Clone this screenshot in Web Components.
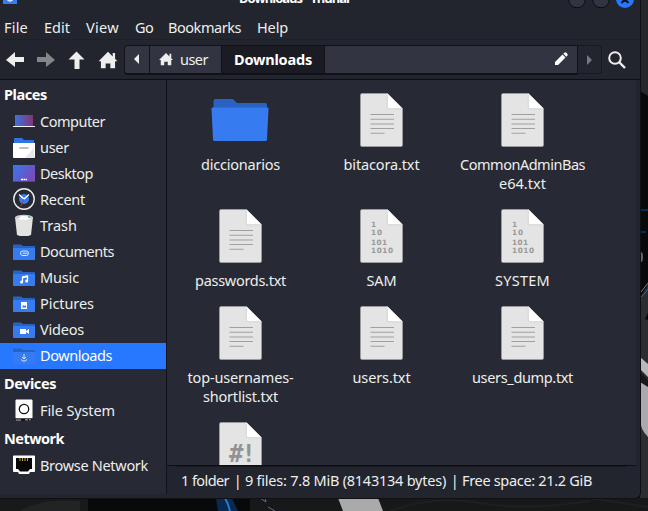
<!DOCTYPE html>
<html lang="es"><head><meta charset="utf-8"><title>Downloads - Thunar</title>
<style>html,body{margin:0;width:648px;height:511px;overflow:hidden;background:#090a0c}body{font:14.5px "Noto Sans",sans-serif;color:#eeeeec}</style></head>
<body><desk-top></desk-top>
<script>
const define=(name,html,setup)=>customElements.define(name,class extends HTMLElement{
  connectedCallback(){if(this.shadowRoot)return;const r=this.attachShadow({mode:'open'});r.innerHTML=typeof html==='function'?html(this):html;if(setup)setup(this,r)}
});
// Text run whose tracking is adjusted to a given width
define('fit-text','<style>:host{display:inline-block;white-space:pre}span{display:inline-block}</style><span></span>',(el,r)=>{
  const s=r.querySelector('span'),t=el.getAttribute('t'),w=+el.getAttribute('w');s.textContent=t;
  if(w){const n=s.getBoundingClientRect().width;s.style.letterSpacing=((w-n)/t.length)+'px';el.style.width=w+'px'}
});
const F=(t,w)=>`<fit-text t="${t}" w="${w}"></fit-text>`;
const homeP='M8 1 0 9h2v6h4v-4h4v4h4V9h2l-2-2V2h-2v3z';
const folder=g=>`<path d="M1 4.5h7l2 1.5h11q1 0 1 1v3H0V5q0-.5 1-.5" fill="#2a62c4"/><path d="M0 8h22v11q0 1-1 1H1q-1 0-1-1z" fill="#367bf0"/>${g}`;
const icons={
computer:'<defs><linearGradient id="g"><stop stop-color="#3c72dc"/><stop offset="1" stop-color="#853477"/></linearGradient></defs><path d="M2 5h18v11H2z" fill="url(#g)"/><path d="M0 16h22v1H0z" fill="#f4f4f4"/>',
user:'<path d="M1 3q0-1 1-1h7l2 2h10v4H1z" fill="#2f74e6"/><path d="M0 7h22v14q0 1-1 1H1q-1 0-1-1z" fill="#fff"/><path d="M21 12v10H12z" fill="#e8e8e8"/><path d="M7 12h8" stroke="#aaa" stroke-width="1.6" stroke-linecap="round"/>',
desktop:'<defs><linearGradient id="g" x2="1" y2=".5"><stop stop-color="#3578ee"/><stop offset="1" stop-color="#784cba"/></linearGradient></defs><path d="M0 3h22v17H0z" fill="url(#g)"/><path d="M0 19h22v1H0z" fill="#2b54aa"/><path d="M8 17.5h2m.5 0h2m.5 0h1" stroke="#fff" stroke-width="1.6"/>',
recent:'<circle cx="11" cy="11" r="10.2" fill="#272a34" stroke="#eee" stroke-width="1.4"/><circle cx="11" cy="11" r="5" fill="#367bf0"/><path d="m6 6.500 5 4.500 5-4.500" fill="none" stroke="#fff" stroke-width="1.4"/><path d="m11 11-3.2 7" stroke="#bd3448"/>',
trash:'<path d="M2 3h18l-2 18q-7 3-14 0z" fill="#e3e3e1"/><ellipse cx="11" cy="3.5" rx="9" ry="2.8" fill="#ccc"/><ellipse cx="11" cy="3.9" rx="7.2" ry="2" fill="#fff"/><path d="M4 4l3-1" stroke="#e5bd3c" stroke-width="1.3"/><path d="M15 2.7l2.5 1" stroke="#4aa69a" stroke-width="1.3"/>',
documents:folder('<rect x="7.5" y="11" width="8" height="4.5" rx="2.2" fill="none" stroke="#dce9ff"/><path d="M9.5 13.2h5" stroke="#dce9ff"/>'),
music:folder('<path d="M9.5 16v-5l5-1v5" fill="none" stroke="#fff" stroke-width="1.3"/><path d="M9.5 11.4l5-1" stroke="#fff" stroke-width="1.6"/><circle cx="8.6" cy="16" r="1.5" fill="#fff"/><circle cx="13.6" cy="15" r="1.5" fill="#fff"/>'),
pictures:folder('<path d="M8 10h6v7H8z" fill="#fff"/><path d="m9 15.5 1.5-2.5 1 1 1-1 1 2.5z" fill="#367bf0"/>'),
videos:folder('<path d="M7 11h6v2l3-2v5l-3-2v2H7z" fill="#fff"/>'),
downloads:folder('<path d="M11 10v5m-2-2 2 2 2-2m-5 2.5 2 1.5h2l2-1.5" fill="none" stroke="#d7e5ff"/>'),
disk:'<path d="M3 1h16v18H3z" fill="#fff" stroke="#fff"/><circle cx="11" cy="10" r="4.7" fill="none" stroke="#111" stroke-width="1.3"/><path d="M3 19.5h16v2H3z" fill="#090909"/><path d="M3 21h5M12 20.8h3m1 0h2" stroke="#bbb"/>',
network:'<path d="M1 1.5h20q1 0 1 1V17q0 1-1 1h-4l-1 2H6l-1-2H1q-1 0-1-1V2.5q0-1 1-1" fill="#fff"/><path d="M3 4h16v11h-2l-2 2.5H7L5 15H3z" fill="#080808"/><path d="M7 4v3m2.5-3v3m2.5-3v3m2.5-3v3" stroke="#b79b3d"/>'
};
define('place-heading',el=>`<style>:host{display:flex;align-items:center;height:29px;padding:0 0 2px 4px;font-weight:700;color:#fff;box-sizing:border-box}</style>${F(el.getAttribute('t'),el.getAttribute('w'))}`);
define('place-item',el=>`<style>:host{display:flex;align-items:center;height:26px;box-sizing:border-box;padding:0 0 2px 13px;gap:5px}:host([selected]){background:#2777ff;color:#fff}svg{width:22px;height:22px;flex:none}</style><svg viewBox="0 0 22 22">${icons[el.getAttribute('icon')]}</svg>${F(el.getAttribute('t'),el.getAttribute('w'))}`);
const P=(i,t,w,s='')=>`<place-item icon="${i}" t="${t}" w="${w}" ${s}></place-item>`,H=(t,w)=>`<place-heading t="${t}" w="${w}"></place-heading>`;
define('places-panel',`<style>:host{display:block;background:#272a34;border-right:1px solid #111218}</style>
${H('Places',43)}${P('computer','Computer',65)}${P('user','user',29)}${P('desktop','Desktop',53)}${P('recent','Recent',45)}${P('trash','Trash',37)}${P('documents','Documents',74)}${P('music','Music',39)}${P('pictures','Pictures',54)}${P('videos','Videos',44)}${P('downloads','Downloads',72,'selected')}${H('Devices',52)}${P('disk','File System',75)}${H('Network',60)}${P('network','Browse Network',108)}`);
const page=g=>`<path d="M10 .5h25.5l15 15V52q0 1.500-1.500 1.500H10Q8.500 53.500 8.500 52V2Q8.500.5 10 .5z" fill="#e4e4e4" stroke="#a9aaad" stroke-width=".6"/><path d="M35.500.5l15 15H37q-1.500 0-1.500-1.500z" fill="#fff"/><path d="M35.300 2v12q0 1.800 1.700 1.800h13" fill="none" stroke="#ccc" stroke-width=".7"/>${g}`;
const files={
text:page('<path d="M18.500 21.500H42M18.500 26.200H42M18.500 31H42M18.500 35.500H42M18.500 40.300h14" stroke="#a0a0a0" stroke-width="1.100"/>'),
binary:page('<g fill="#999" font-family="DejaVu Sans" font-weight="700" font-size="7.300"><text x="19" y="18" textLength="5">1</text><text x="19" y="26" textLength="11">10</text><text x="19" y="35.500" textLength="16">101</text><text x="19" y="43.500" textLength="22">1010</text></g>'),
script:page('<text x="18" y="39.500" fill="#929292" font-family="DejaVu Sans Mono" font-weight="700" font-size="24" textLength="27">#!</text>'),
folder:'<path d="M2.500 18V8q0-2 2-2H21q1 0 2 1l3 3h28q2 0 2 2v6z" fill="#2a62c4"/><path d="M1.500 14.500h55q1 0 1 1L56 46.500q0 1.500-1.500 1.500h-51Q2 48 2 46.500L.5 15.500q0-1 1-1z" fill="#367bf0"/>'};
define('file-item',el=>`<style>:host{display:flex;flex-direction:column;align-items:center;width:141px;padding-bottom:16px}svg{width:58px;height:54px;margin:0 2px 8px 0}fit-text{line-height:19px}</style><svg viewBox="0 0 58 54">${files[el.getAttribute('type')]}</svg>${el.getAttribute('lines').split(';').map(l=>F(...l.split(':'))).join('')}`);
const I=(t,l)=>`<file-item type="${t}" lines="${l}"></file-item>`;
define('file-grid',`<style>:host{display:grid;grid-template-columns:repeat(3,141px);align-content:start;padding:13px 0 0 3px;background:#272a34;overflow:hidden;box-sizing:border-box;border-bottom:1px solid #0e0f13}</style>
${I('folder','diccionarios:79')}${I('text','bitacora.txt:76')}${I('text','CommonAdminBas:125;e64.txt:47')}${I('text','passwords.txt:91')}${I('binary','SAM:30')}${I('binary','SYSTEM:55')}${I('text','top-usernames-:106;shortlist.txt:75')}${I('text','users.txt:58')}${I('text','users_dump.txt:101')}${I('script','')}`);
define('title-bar',`<style>:host{display:flex;justify-content:space-between;height:10px;overflow:hidden;position:relative}b{position:absolute;left:239px;top:-11px;line-height:19px;font-size:13px;color:#fff}svg{display:block}</style>
<svg width="20" height="10"><path d="M3-5h14V4H3z" fill="#367bf0"/><path d="M7-1q3 4 6 0" fill="none" stroke="#e4efff" stroke-width="1.500"/></svg><b>${F('Downloads - Thunar',112)}</b>
<svg width="72" height="10"><g fill="#323541" stroke="#0d0e12"><circle cx="9" cy="-.5" r="8.300"/><circle cx="33" cy="-.5" r="8.300"/></g><circle cx="57" cy="-1" r="9" fill="#2777ff"/><path d="M53.500 3l7-7m-7 0 7 7" stroke="#101625" stroke-width="2.200"/></svg>`);
define('menu-bar',`<style>:host{display:flex;height:30px;box-sizing:border-box;align-items:center;padding:5px 0 0 4px;border-bottom:1px solid #1e2027}fit-text{margin-right:16px}fit-text:nth-of-type(5){margin-left:-1px}</style>${F('File',24)}${F('Edit',26)}${F('View',33)}${F('Go',18)}${F('Bookmarks',73)}${F('Help',31)}`);
define('tool-bar',`<style>:host{display:flex;height:40px;box-sizing:border-box;align-items:center;border-bottom:1px solid #0e0f13;padding-left:5px}
svg{display:block;flex:none}.i{margin-right:11px}.path{display:flex;box-sizing:border-box;width:454px;height:30px;border:1px solid #111218;border-bottom-width:2px;background:#323541;border-radius:4px 0 0 4px;margin-left:-5px;overflow:hidden}.path>*{display:flex;align-items:center;box-sizing:border-box;height:100%}.prev{width:25px;border-right:1px solid #111218;justify-content:center}.home{width:72px;padding-left:9px;gap:7px;border-right:1px solid #111218}.cur{width:103px;background:#1b1c23;padding-left:12px;border-right:1px solid #111218;font-weight:700;color:#fff}.edit{flex:1;justify-content:flex-end;padding-right:9px}.next{width:24px;height:29px;display:grid;place-items:center;box-sizing:border-box;border:1px solid #181a20;border-left:0;border-radius:0 4px 4px 0}.search{margin-left:5px}</style>
<svg class="i" width="20" height="20"><path d="M1 10l9-8v5h9v5h-9v5z" fill="#eee"/></svg>
<svg class="i" width="20" height="20"><path d="M19 10l-9-8v5H1v5h9v5z" fill="#858689"/></svg>
<svg class="i" width="20" height="20"><path d="M9.500 1.500l8 8h-5V19h-5V9.500h-6z" fill="#eee"/></svg>
<svg class="i" width="20" height="20" viewBox="-.500 -.500 17 17"><path d="${homeP}" fill="#eee"/></svg>
<div class="path"><div class="prev"><svg width="6" height="10"><path d="M0 5l5-5v10z" fill="#eee"/></svg></div><div class="home"><svg width="14" height="14" viewBox="0 0 16 16"><path d="${homeP}" fill="#eee"/></svg>${F('user',28)}</div><div class="cur">${F('Downloads',78)}</div><div class="edit"><svg width="14" height="14"><path d="M1 13v-3l7.500-7.500 3 3L4 13zM9.300 1.700l1-1q1-.8 2 0l1 1q.8 1 0 2l-1 1z" fill="#fff"/></svg></div></div><div class="next"><svg width="6" height="10"><path d="M0 0l5 5-5 5z" fill="#77797f"/></svg></div>
<svg class="search" width="20" height="20"><circle cx="8" cy="8" r="5.800" fill="none" stroke="#eee" stroke-width="2"/><path d="M12 12l6 6" stroke="#eee" stroke-width="2.400"/></svg>`);
define('status-bar',`<style>:host{display:flex;align-items:center;padding:0 0 2px 14px;height:29px;box-sizing:border-box;position:relative}:host:before{content:"";position:absolute;left:10px;right:10px;top:0;height:1px;background:#15171c}</style>${F('1 folder',48)}${F('  |  ',16)}${F('9 files: 7.8 MiB (8143134 bytes)',201)}${F('  |  ',16)}${F('Free space: 21.2 GiB',130)}`);
define('file-window',`<style>:host{display:block;box-sizing:border-box;width:641px;height:499px;background:#22252e;border-right:1px solid #0f1014;border-bottom:1px solid #0f1014;border-radius:0 0 6px 0;overflow:hidden}main{display:grid;grid-template-columns:167px 469px;grid-template-rows:386px 28px}places-panel{grid-row:1/3}</style><title-bar></title-bar><menu-bar></menu-bar><tool-bar></tool-bar><main><places-panel></places-panel><file-grid></file-grid><status-bar></status-bar></main>`);
define('desk-top',`<style>:host{display:block;position:relative;width:648px;height:511px;overflow:hidden}svg{position:absolute;inset:0}file-window{position:relative}</style>
<svg width="648" height="511"><path d="M0 0h648v511H0z" fill="#08090b"/><path d="M640 0h8v96l-8-5z" fill="#26272a"/><path d="M640 298l8-14v227h-8z" fill="#2c2d30"/><path d="M640 210h8M640 232h6" stroke="#07519a"/><path d="M641 297q4-3 7-8" stroke="#0872d1" fill="none"/><path d="M641 292l7-9" stroke="#777"/><ellipse cx="641" cy="257" rx="2" ry="5" fill="#666"/><path d="M645 319l3-6v7z" fill="#07080b"/><path d="M640 357l8 7v13l-8-8z" fill="#b8b7ba"/><path d="M640 372l8 8v7l-8-5z" fill="#17181b"/><path d="M640 382l8 5v50q-8-8-8-18z" fill="#aaa9ad"/>
<path d="M0 498h88v13H0z" fill="#18191a"/><path d="M20 511q20-13 60-10v10z" fill="#222324"/><path d="M216 498h16l6 13h-20z" fill="#092a50"/><path d="M225 498q3 5 5 13" stroke="#237bd2" stroke-width="2" fill="none"/><path d="M250 498h398v13H250z" fill="#17181a"/><path d="M260 498h5l1 4zM268 507l7 4" stroke="#58708e" fill="none"/><path d="M338 498h40l5 13h-40z" fill="#aaa9ab"/><path d="M390 511q45-16 90-8t110-2M590 498l58 9" stroke="#1e1f21" fill="none" stroke-width="2"/></svg><file-window></file-window>`);
</script></body></html>
